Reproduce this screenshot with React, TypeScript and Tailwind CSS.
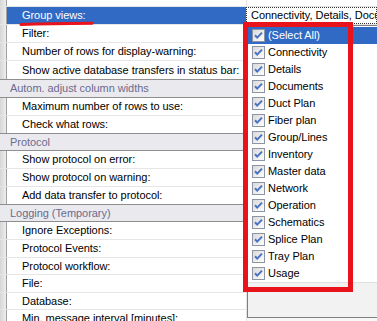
type Row =
  | { kind: "prop"; label: string; h: number; selected?: boolean; value?: string }
  | { kind: "cat"; label: string; h: number };

const rows: Row[] = [
  { kind: "prop", label: "Group views:", h: 18, selected: true, value: "Connectivity, Details, Documents, Duct Plan" },
  { kind: "prop", label: "Filter:", h: 18 },
  { kind: "prop", label: "Number of rows for display-warning:", h: 18 },
  { kind: "prop", label: "Show active database transfers in status bar:", h: 19 },
  { kind: "cat", label: "Autom. adjust column widths", h: 18 },
  { kind: "prop", label: "Maximum number of rows to use:", h: 18 },
  { kind: "prop", label: "Check what rows:", h: 18 },
  { kind: "cat", label: "Protocol", h: 17 },
  { kind: "prop", label: "Show protocol on error:", h: 18 },
  { kind: "prop", label: "Show protocol on warning:", h: 18 },
  { kind: "prop", label: "Add data transfer to protocol:", h: 18 },
  { kind: "cat", label: "Logging (Temporary)", h: 17 },
  { kind: "prop", label: "Ignore Exceptions:", h: 18 },
  { kind: "prop", label: "Protocol Events:", h: 18 },
  { kind: "prop", label: "Protocol workflow:", h: 17 },
  { kind: "prop", label: "File:", h: 18 },
  { kind: "prop", label: "Database:", h: 17 },
  { kind: "prop", label: "Min. message interval [minutes]:", h: 18 },
];

const items = [
  "(Select All)",
  "Connectivity",
  "Details",
  "Documents",
  "Duct Plan",
  "Fiber plan",
  "Group/Lines",
  "Inventory",
  "Master data",
  "Network",
  "Operation",
  "Schematics",
  "Splice Plan",
  "Tray Plan",
  "Usage",
];

const CheckBox = () => (
  <svg width="13" height="13" viewBox="0 0 13 13" className="shrink-0">
    <defs>
      <linearGradient id="cbg" x1="0" y1="0" x2="1" y2="1">
        <stop offset="0" stopColor="#d8d8d8" />
        <stop offset="1" stopColor="#ffffff" />
      </linearGradient>
    </defs>
    <rect x="0.5" y="0.5" width="12" height="12" fill="url(#cbg)" stroke="#8c94a6" />
    <path d="M3 6.2 L5.2 8.6 L10 3.6" fill="none" stroke="#4a72c2" strokeWidth="2" />
  </svg>
);

export default function App() {
  return (
    <div
      className="relative w-[377px] h-[321px] overflow-hidden bg-white text-[11px] tracking-[-0.05px] text-black"
      style={{ fontFamily: '"Liberation Sans", Arial, sans-serif' }}
    >
      {/* grid */}
      <div className="flex flex-col">
        <div className="flex h-[7px] border-b border-[#e4e4e4]">
          <div className="w-[7px] bg-gradient-to-r from-[#d6d6d6] to-[#ededed] border-r border-[#a0a0a0]" />
          <div className="w-[239px]" />
          <div className="flex-1 border-l border-[#e4e4e4]" />
        </div>
        {rows.map((r) =>
          r.kind === "cat" ? (
            <div
              key={r.label}
              className="flex items-center pl-[10px] border-y border-[#8e8e8e] bg-[#eaeaee] text-[#6b6b8e] -mt-px"
              style={{ height: r.h + 1 }}
            >
              {r.label}
            </div>
          ) : (
            <div key={r.label} className="flex border-b border-[#e6e6e6]" style={{ height: r.h }}>
              <div className="w-[7px] bg-gradient-to-r from-[#d6d6d6] to-[#ededed] border-r border-[#a0a0a0]" />
              <div
                className={
                  "w-[239px] flex items-center pl-[15px] whitespace-nowrap overflow-hidden " +
                  (r.selected ? "bg-[#316ac5] text-white" : "bg-white")
                }
              >
                {r.label}
              </div>
              <div
                className={
                  "flex-1 flex items-center pl-[4px] whitespace-nowrap overflow-hidden " +
                  (r.selected ? "border border-dotted border-[#333]" : "border-l border-[#e4e4e4] bg-[#f7f7f7]")
                }
              >
                {r.value}
              </div>
            </div>
          )
        )}
      </div>

      {/* red annotation under the selected label */}
      <svg className="absolute left-[19px] top-[20px]" width="76" height="8" viewBox="0 0 76 8">
        <path d="M2 4.6 Q30 3.4 73 3.2" fill="none" stroke="#e8131b" strokeWidth="3" strokeLinecap="round" />
      </svg>

      {/* dropdown popup */}
      <div className="absolute left-[247px] top-[25px] w-[140px] h-[293px] flex flex-col border border-[#7f7f7f] bg-white">
        <div className="pt-px flex flex-col">
          {items.map((it, i) => (
            <div
              key={it}
              className={
                "h-[17px] flex items-center gap-[3px] pl-[4px] whitespace-nowrap " +
                (i === 0 ? "bg-[#316ac5] text-white" : "")
              }
            >
              <CheckBox />
              <span>{it}</span>
            </div>
          ))}
        </div>
        <div className="flex-1 bg-[#f2f2f2] border-t border-[#e0e0e0]" />
      </div>

      {/* red annotation box */}
      <div className="absolute left-[243px] top-[22px] w-[110px] h-[270px] border-[5px] border-[#e8131b]" />
    </div>
  );
}
